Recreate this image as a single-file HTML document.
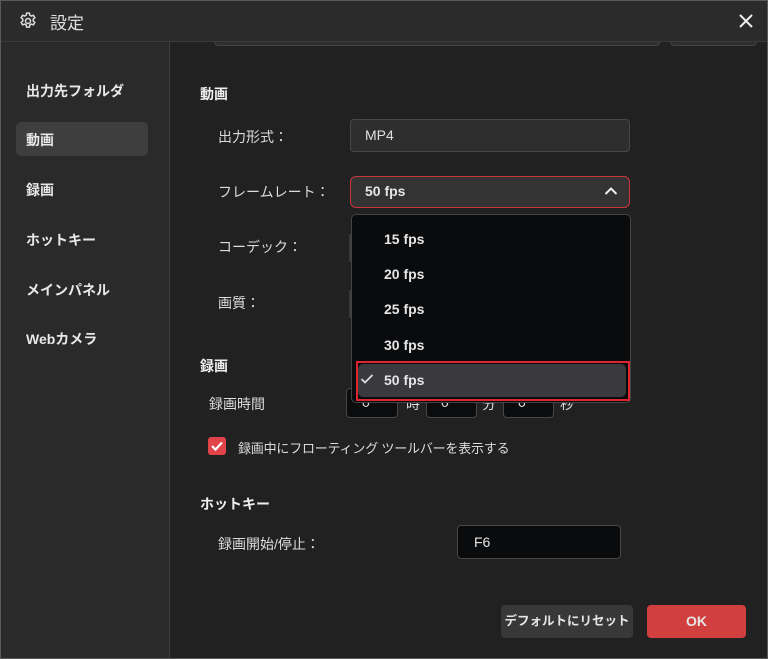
<!DOCTYPE html>
<html><head><meta charset="utf-8"><style>
*{margin:0;padding:0;box-sizing:border-box}
body{width:768px;height:659px;background:#212121;font-family:"Liberation Sans","Noto Sans CJK JP",sans-serif;color:#e6e6e6;position:relative;overflow:hidden;font-size:14px}
.a{position:absolute;white-space:nowrap}
.frame{position:absolute;left:0;top:0;width:768px;height:659px;border:1px solid #5a5a5a;pointer-events:none}
.title{position:absolute;left:0;top:0;width:768px;height:42px;background:#2b2b2b;border-bottom:1px solid #3a3a3a}
.side{position:absolute;left:0;top:42px;width:170px;height:617px;background:#2a2a2a;border-right:1px solid #3a3a3a}
.si{font-weight:bold;font-size:14px;left:26px;color:#e8e8e8}
.lab{font-size:14px;color:#dcdcdc}
.h{font-weight:bold;font-size:14px;color:#f0f0f0}
.box{position:absolute;border:1px solid #474747;border-radius:4px}
</style></head><body>
<div class="title"></div>
<svg class="a" style="left:18px;top:11px" width="20" height="20" viewBox="0 0 24 24" fill="none" stroke="#ddd" stroke-width="1.8"><path d="M10.3 2.5h3.4l.5 2.6 1.8 1 2.5-.9 1.7 2.9-2 1.7v2.2l2 1.7-1.7 2.9-2.5-.9-1.8 1-.5 2.6h-3.4l-.5-2.6-1.8-1-2.5.9-1.7-2.9 2-1.7v-2.2l-2-1.7 1.7-2.9 2.5.9 1.8-1z"/><circle cx="12" cy="12" r="3"/></svg>
<div class="a" style="left:50px;top:9px;font-size:17px;color:#e0e0e0">設定</div>
<svg class="a" style="left:738px;top:13px" width="16" height="16" viewBox="0 0 16 16" stroke="#eee" stroke-width="2"><path d="M2 2L14 14M14 2L2 14"/></svg>
<div class="side"></div>
<div class="a" style="left:214px;top:42px;width:446px;height:4px;background:#2e2e2e;border:1px solid #444;border-top:none;border-radius:0 0 4px 4px"></div>
<div class="a" style="left:670px;top:42px;width:87px;height:4px;background:#2e2e2e;border:1px solid #444;border-top:none;border-radius:0 0 4px 4px"></div>
<div class="a si" style="top:81px">出力先フォルダ</div>
<div class="a" style="left:16px;top:122px;width:132px;height:34px;background:#3e3e3e;border-radius:5px"></div>
<div class="a si" style="top:130px">動画</div>
<div class="a si" style="top:180px">録画</div>
<div class="a si" style="top:230px">ホットキー</div>
<div class="a si" style="top:280px">メインパネル</div>
<div class="a si" style="top:329px">Webカメラ</div>

<div class="a h" style="left:200px;top:84px">動画</div>
<div class="a lab" style="left:218px;top:127px">出力形式：</div>
<div class="box" style="left:350px;top:119px;width:280px;height:33px;background:#2e2e2e"></div>
<div class="a" style="left:365px;top:127px;color:#e0e0e0">MP4</div>
<div class="a lab" style="left:218px;top:182px">フレームレート：</div>
<div class="box" style="left:350px;top:176px;width:280px;height:32px;background:#333;border-color:#c9353b;border-radius:6px"></div>
<div class="a" style="left:365px;top:183px;font-weight:bold">50 fps</div>
<svg class="a" style="left:604px;top:186px" width="14" height="10" viewBox="0 0 14 10" fill="none" stroke="#eee" stroke-width="2"><path d="M1.5 8L7 2.5 12.5 8"/></svg>
<div class="a lab" style="left:218px;top:237px">コーデック：</div>
<div class="a lab" style="left:218px;top:293px">画質：</div>
<div class="a" style="left:349px;top:234px;width:3px;height:28px;background:#3a3a3a"></div>
<div class="a" style="left:349px;top:290px;width:3px;height:28px;background:#3a3a3a"></div>

<div class="a h" style="left:200px;top:356px">録画</div>
<div class="a lab" style="left:209px;top:394px">録画時間</div>
<div class="box" style="left:346px;top:388px;width:52px;height:30px;background:#0b0c0e"></div>
<div class="box" style="left:426px;top:388px;width:51px;height:30px;background:#0b0c0e"></div>
<div class="box" style="left:503px;top:388px;width:51px;height:30px;background:#0b0c0e"></div>
<div class="a" style="left:362px;top:394px;color:#ddd">0</div>
<div class="a" style="left:441px;top:394px;color:#ddd">0</div>
<div class="a" style="left:518px;top:394px;color:#ddd">0</div>
<div class="a lab" style="left:406px;top:394px">時</div>
<div class="a lab" style="left:482px;top:394px">分</div>
<div class="a lab" style="left:560px;top:394px">秒</div>

<div class="box" style="left:351px;top:214px;width:280px;height:189px;background:#0a0b0d;border-color:#444;border-radius:5px"></div>
<div class="a" style="left:384px;top:231px;font-weight:bold">15 fps</div>
<div class="a" style="left:384px;top:266px;font-weight:bold">20 fps</div>
<div class="a" style="left:384px;top:301px;font-weight:bold">25 fps</div>
<div class="a" style="left:384px;top:337px;font-weight:bold">30 fps</div>
<div class="a" style="left:356px;top:361px;width:274px;height:40px;border:2px solid #e0252f"></div>
<div class="a" style="left:358px;top:364px;width:268px;height:33px;background:#3a3a3e;border-radius:5px"></div>
<svg class="a" style="left:360px;top:373px" width="14" height="12" viewBox="0 0 14 12" fill="none" stroke="#ddd" stroke-width="1.8"><path d="M1.5 6L5 9.5 12.5 2"/></svg>
<div class="a" style="left:384px;top:372px;font-weight:bold">50 fps</div>

<div class="a" style="left:208px;top:437px;width:18px;height:18px;background:#e04349;border-radius:3px"></div>
<svg class="a" style="left:210px;top:440px" width="14" height="12" viewBox="0 0 14 12" fill="none" stroke="#fff" stroke-width="2.2"><path d="M2 6L5.5 9.5 12 2.5"/></svg>
<div class="a lab" style="left:238px;top:438px;font-size:13px;letter-spacing:-0.2px">録画中にフローティング ツールバーを表示する</div>

<div class="a h" style="left:200px;top:494px">ホットキー</div>
<div class="a lab" style="left:218px;top:534px">録画開始/停止：</div>
<div class="box" style="left:457px;top:525px;width:164px;height:34px;background:#0a0b0d"></div>
<div class="a" style="left:474px;top:534px">F6</div>

<div class="a" style="left:501px;top:605px;width:132px;height:33px;background:#383838;border-radius:4px;text-align:center;line-height:33px;font-weight:bold;font-size:12.5px">デフォルトにリセット</div>
<div class="a" style="left:647px;top:605px;width:99px;height:33px;background:#d13f3f;border-radius:4px;text-align:center;line-height:33px;font-weight:bold;font-size:14px">OK</div>
<div class="frame"></div>
</body></html>
